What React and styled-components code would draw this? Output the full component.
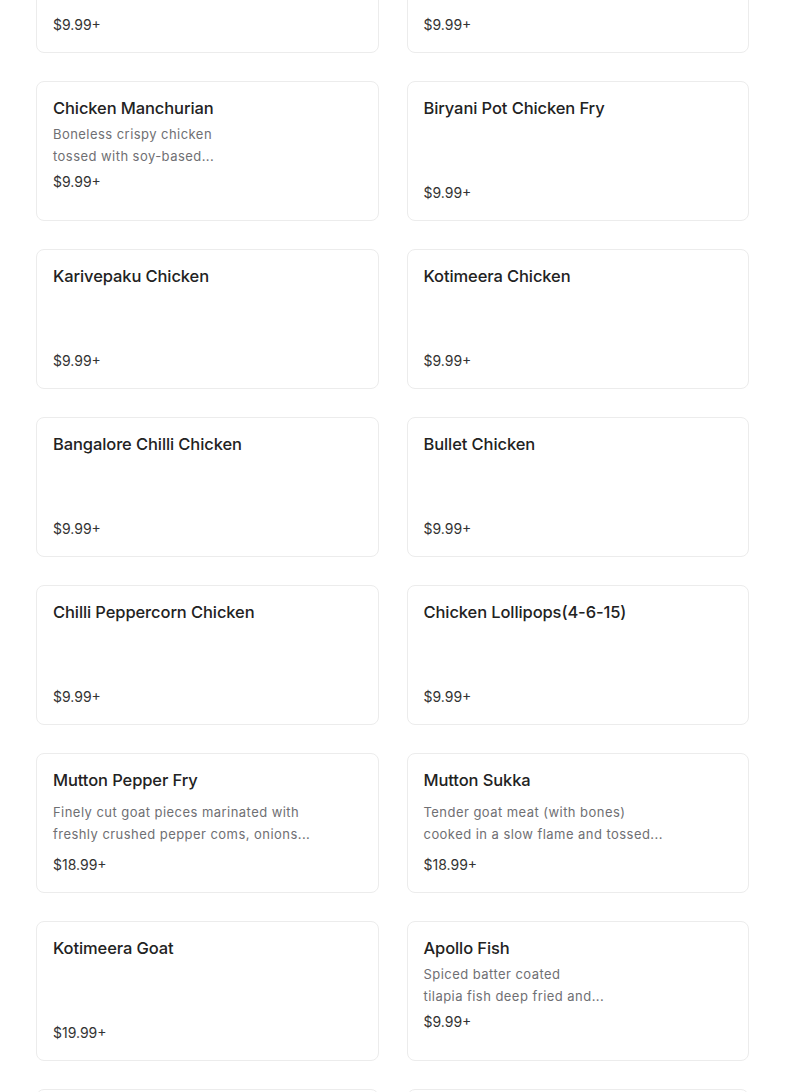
import React from "react";
import styled, { createGlobalStyle } from "styled-components";

// menu items, in the order shown (first row is scrolled mostly out of view)
const items = [
  { price: "$9.99+" },
  { price: "$9.99+" },
  {
    name: "Chicken Manchurian",
    desc: ["Boneless crispy chicken", "tossed with soy-based..."],
    price: "$9.99+",
  },
  { name: "Biryani Pot Chicken Fry", price: "$9.99+" },
  { name: "Karivepaku Chicken", price: "$9.99+" },
  { name: "Kotimeera Chicken", price: "$9.99+" },
  { name: "Bangalore Chilli Chicken", price: "$9.99+" },
  { name: "Bullet Chicken", price: "$9.99+" },
  { name: "Chilli Peppercorn Chicken", price: "$9.99+" },
  { name: "Chicken Lollipops(4-6-15)", price: "$9.99+" },
  {
    name: "Mutton Pepper Fry",
    desc: ["Finely cut goat pieces marinated with", "freshly crushed pepper coms, onions..."],
    price: "$18.99+",
    spread: true,
  },
  {
    name: "Mutton Sukka",
    desc: ["Tender goat meat (with bones)", "cooked in a slow flame and tossed..."],
    price: "$18.99+",
    spread: true,
  },
  { name: "Kotimeera Goat", price: "$19.99+" },
  {
    name: "Apollo Fish",
    desc: ["Spiced batter coated", "tilapia fish deep fried and..."],
    price: "$9.99+",
  },
  { price: "" },
  { price: "" },
];

function App() {
  return (
    <>
      <GlobalStyle />
      <Page>
        <Grid>
          {items.map((item, i) => (
            <Card key={i} $spread={item.spread}>
              {item.name && <Title>{item.name}</Title>}
              {item.desc && (
                <Desc>
                  {item.desc.map((line) => (
                    <DescLine key={line}>{line}</DescLine>
                  ))}
                </Desc>
              )}
              <Price $bottom={!item.desc}>{item.price}</Price>
            </Card>
          ))}
        </Grid>
      </Page>
    </>
  );
}

export default App;

const GlobalStyle = createGlobalStyle`
  html, body {
    margin: 0;
    padding: 0;
    background: #fff;
    font-family: Inter, "Noto Sans", sans-serif;
    overflow: hidden;
  }
`;

const Page = styled.div`
  height: 1092px;
  overflow: hidden;
  padding: 0 36px;
`;

const Grid = styled.div`
  display: grid;
  grid-template-columns: 1fr 1fr;
  gap: 28px 28px;
  margin-top: -87px;
`;

const Card = styled.div`
  box-sizing: border-box;
  height: 140px;
  padding: 15px 16px 16px;
  border: 1px solid #ececec;
  border-radius: 8px;
  background: #fff;
  display: flex;
  flex-direction: column;
  justify-content: ${(p) => (p.$spread ? "space-between" : "flex-start")};
`;

const Title = styled.div`
  font-size: 16.5px;
  font-weight: 500;
  line-height: 22px;
  letter-spacing: -0.1px;
  color: #222;
`;

const Desc = styled.div`
  margin-top: 4px;
  font-size: 13px;
  line-height: 22px;
  letter-spacing: 0.45px;
  color: #6f6f73;
`;

const DescLine = styled.div`
  white-space: nowrap;
`;

const Price = styled.div`
  margin-top: ${(p) => (p.$bottom ? "auto" : "4px")};
  font-size: 14px;
  line-height: 22px;
  color: #333;
`;
